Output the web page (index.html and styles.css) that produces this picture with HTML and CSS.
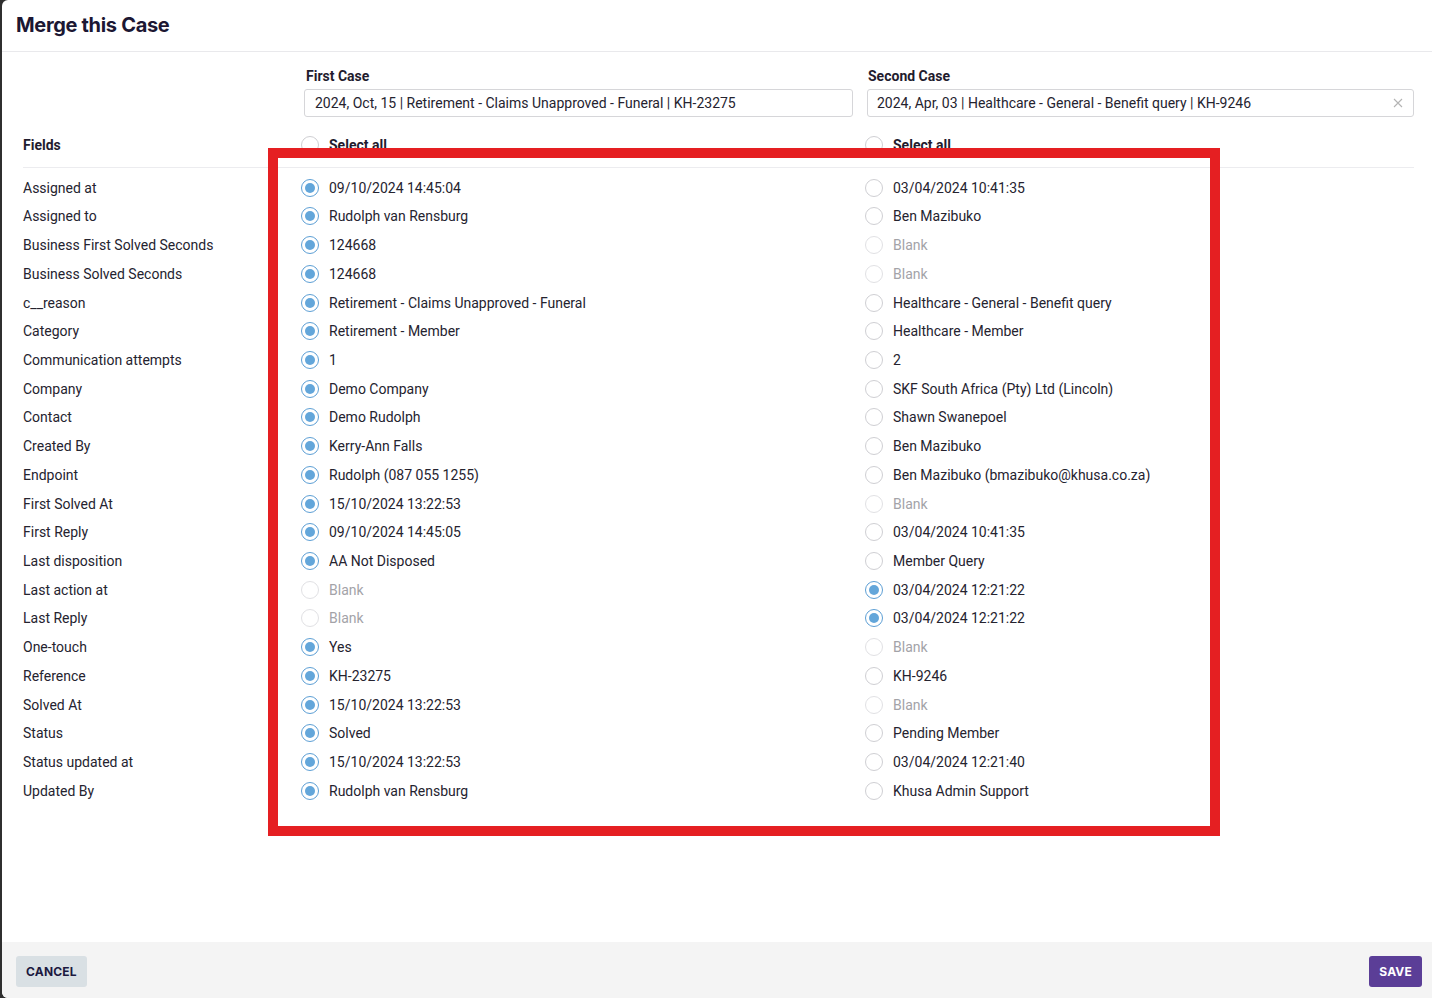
FILE: index.html
```html
<!DOCTYPE html>
<html lang="en">
<head>
<meta charset="utf-8">
<title>Merge this Case</title>
<link rel="stylesheet" href="styles.css">
</head>
<body>
<div class="modal">
  <div class="modal-header"><h1 class="title">Merge this Case</h1></div>
  <div class="modal-body">
    <div class="cases">
      <div class="case-spacer"></div>
      <div class="case case-first">
        <div class="case-label">First Case</div>
        <div class="case-input">2024, Oct, 15 | Retirement - Claims Unapproved - Funeral | KH-23275</div>
      </div>
      <div class="case case-second">
        <div class="case-label">Second Case</div>
        <div class="case-input">2024, Apr, 03 | Healthcare - General - Benefit query | KH-9246
          <svg class="clear" width="10" height="10" viewBox="0 0 10 10"><path d="M1 1L9 9M9 1L1 9" stroke="#b4b4b4" stroke-width="1.1"/></svg>
        </div>
      </div>
    </div>

    <div class="row head">
      <div class="field">Fields</div>
      <div class="opt"><span class="radio"></span><span>Select all</span></div>
      <div class="opt"><span class="radio"></span><span>Select all</span></div>
    </div>

    <div class="rows">
      <div class="row"><div class="field">Assigned at</div><div class="opt"><span class="radio on"></span><span>09/10/2024 14:45:04</span></div><div class="opt"><span class="radio"></span><span>03/04/2024 10:41:35</span></div></div>
      <div class="row"><div class="field">Assigned to</div><div class="opt"><span class="radio on"></span><span>Rudolph van Rensburg</span></div><div class="opt"><span class="radio"></span><span>Ben Mazibuko</span></div></div>
      <div class="row"><div class="field">Business First Solved Seconds</div><div class="opt"><span class="radio on"></span><span>124668</span></div><div class="opt blank"><span class="radio"></span><span>Blank</span></div></div>
      <div class="row"><div class="field">Business Solved Seconds</div><div class="opt"><span class="radio on"></span><span>124668</span></div><div class="opt blank"><span class="radio"></span><span>Blank</span></div></div>
      <div class="row"><div class="field">c__reason</div><div class="opt"><span class="radio on"></span><span>Retirement - Claims Unapproved - Funeral</span></div><div class="opt"><span class="radio"></span><span>Healthcare - General - Benefit query</span></div></div>
      <div class="row"><div class="field">Category</div><div class="opt"><span class="radio on"></span><span>Retirement - Member</span></div><div class="opt"><span class="radio"></span><span>Healthcare - Member</span></div></div>
      <div class="row"><div class="field">Communication attempts</div><div class="opt"><span class="radio on"></span><span>1</span></div><div class="opt"><span class="radio"></span><span>2</span></div></div>
      <div class="row"><div class="field">Company</div><div class="opt"><span class="radio on"></span><span>Demo Company</span></div><div class="opt"><span class="radio"></span><span>SKF South Africa (Pty) Ltd (Lincoln)</span></div></div>
      <div class="row"><div class="field">Contact</div><div class="opt"><span class="radio on"></span><span>Demo Rudolph</span></div><div class="opt"><span class="radio"></span><span>Shawn Swanepoel</span></div></div>
      <div class="row"><div class="field">Created By</div><div class="opt"><span class="radio on"></span><span>Kerry-Ann Falls</span></div><div class="opt"><span class="radio"></span><span>Ben Mazibuko</span></div></div>
      <div class="row"><div class="field">Endpoint</div><div class="opt"><span class="radio on"></span><span>Rudolph (087 055 1255)</span></div><div class="opt"><span class="radio"></span><span>Ben Mazibuko (bmazibuko@khusa.co.za)</span></div></div>
      <div class="row"><div class="field">First Solved At</div><div class="opt"><span class="radio on"></span><span>15/10/2024 13:22:53</span></div><div class="opt blank"><span class="radio"></span><span>Blank</span></div></div>
      <div class="row"><div class="field">First Reply</div><div class="opt"><span class="radio on"></span><span>09/10/2024 14:45:05</span></div><div class="opt"><span class="radio"></span><span>03/04/2024 10:41:35</span></div></div>
      <div class="row"><div class="field">Last disposition</div><div class="opt"><span class="radio on"></span><span>AA Not Disposed</span></div><div class="opt"><span class="radio"></span><span>Member Query</span></div></div>
      <div class="row"><div class="field">Last action at</div><div class="opt blank"><span class="radio"></span><span>Blank</span></div><div class="opt"><span class="radio on"></span><span>03/04/2024 12:21:22</span></div></div>
      <div class="row"><div class="field">Last Reply</div><div class="opt blank"><span class="radio"></span><span>Blank</span></div><div class="opt"><span class="radio on"></span><span>03/04/2024 12:21:22</span></div></div>
      <div class="row"><div class="field">One-touch</div><div class="opt"><span class="radio on"></span><span>Yes</span></div><div class="opt blank"><span class="radio"></span><span>Blank</span></div></div>
      <div class="row"><div class="field">Reference</div><div class="opt"><span class="radio on"></span><span>KH-23275</span></div><div class="opt"><span class="radio"></span><span>KH-9246</span></div></div>
      <div class="row"><div class="field">Solved At</div><div class="opt"><span class="radio on"></span><span>15/10/2024 13:22:53</span></div><div class="opt blank"><span class="radio"></span><span>Blank</span></div></div>
      <div class="row"><div class="field">Status</div><div class="opt"><span class="radio on"></span><span>Solved</span></div><div class="opt"><span class="radio"></span><span>Pending Member</span></div></div>
      <div class="row"><div class="field">Status updated at</div><div class="opt"><span class="radio on"></span><span>15/10/2024 13:22:53</span></div><div class="opt"><span class="radio"></span><span>03/04/2024 12:21:40</span></div></div>
      <div class="row"><div class="field">Updated By</div><div class="opt"><span class="radio on"></span><span>Rudolph van Rensburg</span></div><div class="opt"><span class="radio"></span><span>Khusa Admin Support</span></div></div>
    </div>
  </div>
  <div class="modal-footer">
    <button class="btn btn-cancel">CANCEL</button>
    <button class="btn btn-save">SAVE</button>
  </div>
  <div class="highlight"></div>
</div>
</body>
</html>
```
FILE: styles.css
```css
* { box-sizing: border-box; }
html, body { margin: 0; padding: 0; height: 100%; }
body {
  background: #2f2f2f;
  font-family: Roboto, "Liberation Sans", Arial, sans-serif;
  font-size: 14px;
  color: #25232f;
  overflow: hidden;
}
.modal {
  position: relative;
  margin-left: 2px;
  height: 998px;
  background: #fff;
  border-radius: 6px 0 0 6px;
  display: flex;
  flex-direction: column;
  overflow: hidden;
}
.modal-header {
  height: 52px;
  padding: 0 14px;
  border-bottom: 1px solid #e9e9ec;
  display: flex;
  align-items: center;
  flex: none;
}
.title {
  margin: 0;
  font-family: Inter, Roboto, sans-serif;
  font-size: 20px;
  font-weight: 700;
  color: #1c1733;
  letter-spacing: -0.32px;
  line-height: 24px;
  padding-bottom: 2px;
}
.modal-body {
  flex: 1;
  padding: 14px 18px 0 21px;
}
.cases {
  display: grid;
  grid-template-columns: 278px 564px 1fr;
}
.case-first { padding-left: 3px; padding-right: 12px; }
.case-second { padding-left: 2px; }
.case-label {
  font-weight: 700;
  font-size: 14px;
  line-height: 20px;
  color: #1f1c2e;
  margin-bottom: 3px;
  padding-left: 2px;
}
.case-second .case-label { padding-left: 1px; }
.case-input {
  position: relative;
  height: 28px;
  border: 1px solid #d6d6d9;
  border-radius: 3px;
  padding: 0 10px;
  line-height: 26px;
  font-size: 14px;
  color: #25232f;
  white-space: nowrap;
}
.case-second .case-input { padding-left: 9px; }
.clear {
  position: absolute;
  right: 10px;
  top: 8px;
}
.row {
  display: grid;
  grid-template-columns: 278px 564px 1fr;
  height: 28.72px;
  align-items: center;
}
.row.head {
  height: auto;
  margin-top: 18px;
  padding-bottom: 12px;
  border-bottom: 1px solid #ececef;
  line-height: 20px;
  font-weight: 700;
  color: #1f1c2e;
}
.rows { padding-top: 5.3px; }
.field { white-space: nowrap; }
.opt {
  display: flex;
  align-items: center;
  gap: 10px;
  white-space: nowrap;
}
.radio {
  position: relative;
  flex: none;
  width: 18px;
  height: 18px;
  border-radius: 50%;
  border: 1px solid #cfcfd3;
  background: #fff;
}
.radio.on { border-color: #5d9fd5; }
.radio.on::after {
  content: "";
  position: absolute;
  left: 3px;
  top: 3px;
  width: 10px;
  height: 10px;
  border-radius: 50%;
  background: #63a6da;
}
.opt.blank { color: #a3a3a8; }
.opt.blank .radio { border-color: #e1e1e4; }
.modal-footer {
  flex: none;
  height: 56px;
  background: #f4f4f4;
  display: flex;
  justify-content: space-between;
  align-items: flex-start;
  padding: 14px 10px 0 14px;
}
.btn {
  height: 31px;
  border: none;
  border-radius: 3px;
  font-family: Inter, Roboto, sans-serif;
  font-weight: 700;
  font-size: 12px;
  padding: 0 10px;
  letter-spacing: 0.2px;
}
.btn-cancel { background: #d9e0e4; color: #1c1940; }
.btn-save { background: #5b3e97; color: #fff; padding: 0 10px; }
.highlight {
  position: absolute;
  left: 266px;
  top: 148px;
  width: 952px;
  height: 688px;
  border: 10px solid #e51f22;
  pointer-events: none;
}
```
